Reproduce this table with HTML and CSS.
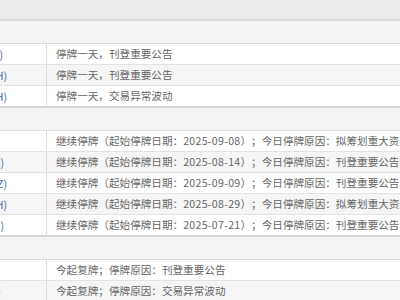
FILE: index.html
```html
<!DOCTYPE html>
<html lang="zh-CN">
<head>
<meta charset="utf-8">
<link rel="stylesheet" href="styles.css">
</head>
<body>
<div class="table">
  <div class="top"></div>

  <div class="group">
    <div class="head"></div>
    <div class="row"><div class="lft e4"><span>科技股份(600111.SH)</span></div><div class="rgt">停牌一天，刊登重要公告</div></div>
    <div class="row alt"><div class="lft e8"><span>实业股份(600222.SH)</span></div><div class="rgt">停牌一天，刊登重要公告</div></div>
    <div class="row last"><div class="lft e8"><span>控股集团(600333.SH)</span></div><div class="rgt">停牌一天，交易异常波动</div></div>
  </div>

  <div class="group">
    <div class="head"></div>
    <div class="row"><div class="lft"></div><div class="rgt">继续停牌（起始停牌日期：<span class="date">2025-09-08</span>）；今日停牌原因：拟筹划重大资产重组</div></div>
    <div class="row alt"><div class="lft e5"><span>电子股份(000111.SZ)</span></div><div class="rgt">继续停牌（起始停牌日期：<span class="date">2025-08-14</span>）；今日停牌原因：刊登重要公告</div></div>
    <div class="row"><div class="lft e8"><span>新材股份(300222.SZ)</span></div><div class="rgt">继续停牌（起始停牌日期：<span class="date">2025-09-09</span>）；今日停牌原因：刊登重要公告</div></div>
    <div class="row alt"><div class="lft e8"><span>能源股份(601333.SH)</span></div><div class="rgt">继续停牌（起始停牌日期：<span class="date">2025-08-29</span>）；今日停牌原因：拟筹划重大资产重组</div></div>
    <div class="row last"><div class="lft e5"><span>医药股份(000444.SZ)</span></div><div class="rgt">继续停牌（起始停牌日期：<span class="date">2025-07-21</span>）；今日停牌原因：刊登重要公告</div></div>
  </div>

  <div class="group">
    <div class="head"></div>
    <div class="row"><div class="lft"></div><div class="rgt">今起复牌；停牌原因：刊登重要公告</div></div>
    <div class="row alt"><div class="lft e2"><span class="cyan">复牌股份 新</span></div><div class="rgt">今起复牌；停牌原因：交易异常波动</div></div>
  </div>
</div>
</body>
</html>
```

FILE: styles.css
```css
*, *::before, *::after {
  box-sizing: border-box;
}

html, body {
  margin: 0;
  padding: 0;
  background: #ffffff;
}

body {
  font-family: "Noto Sans CJK SC", "Noto Sans", sans-serif;
  font-size: 10.6px;
  color: #666666;
  overflow: hidden;
  width: 400px;
  height: 300px;
  text-spacing-trim: space-all;
}

.table {
  display: flex;
  flex-direction: column;
  width: 400px;
}

.top {
  height: 21px;
  background: #ebebeb;
  border-bottom: 2px solid #dcdcdc;
}

.group {
  display: flex;
  flex-direction: column;
}

.head {
  height: 23px;
  background: #f4f4f4;
  border-bottom: 1px solid #dcdcdc;
}

.row {
  display: flex;
  height: 21px;
  background: #ffffff;
  border-bottom: 1px solid #e2e2e2;
}

.row.alt {
  background: #f5f5f5;
}

.row.last {
  height: 22px;
  border-bottom: 2px solid #d6d6d6;
}

.lft {
  width: 47px;
  flex: none;
  border-right: 1px solid #dcdcdc;
  display: flex;
  align-items: center;
  justify-content: flex-end;
  overflow: hidden;
  white-space: nowrap;
  color: #3c67b1;
}

.lft span {
  flex: none;
}

.lft.e2 { padding-right: 45px; }
.lft.e4 { padding-right: 43px; }
.lft.e5 { padding-right: 42px; }
.lft.e8 { padding-right: 39px; }

.cyan {
  color: #8fd6e6;
}

.rgt {
  flex: 1;
  min-width: 0;
  display: block;
  line-height: 20px;
  padding-left: 9px;
  white-space: nowrap;
  overflow: hidden;
}

.date {
  letter-spacing: 0.3px;
}
```
